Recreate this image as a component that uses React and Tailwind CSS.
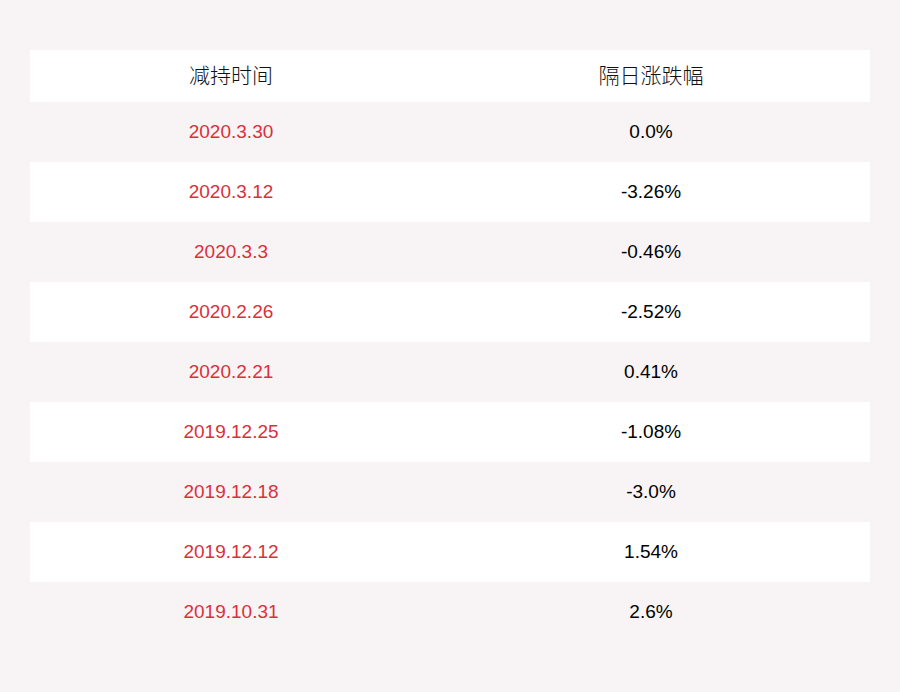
import React from 'react'

const rows = [
  ['2020.3.30', '0.0%'],
  ['2020.3.12', '-3.26%'],
  ['2020.3.3', '-0.46%'],
  ['2020.2.26', '-2.52%'],
  ['2020.2.21', '0.41%'],
  ['2019.12.25', '-1.08%'],
  ['2019.12.18', '-3.0%'],
  ['2019.12.12', '1.54%'],
  ['2019.10.31', '2.6%'],
]

const App = () => {
  return (
    <div className="min-h-[692px] w-[900px] bg-[#f8f4f5] px-[30px] py-[50px] font-['Liberation_Sans','Noto_Sans_CJK_SC',sans-serif]">
      <div className="grid grid-cols-[402px_1fr] h-[52px] bg-white items-center text-[21px] font-light text-[#111]">
        <div className="text-center">减持时间</div>
        <div className="text-center">隔日涨跌幅</div>
      </div>
      {rows.map(([date, pct], i) => (
        <div
          key={date}
          className={`grid grid-cols-[402px_1fr] h-[60px] items-center text-[19px] ${i % 2 === 1 ? 'bg-white' : ''}`}
        >
          <div className="text-center text-[#d9303a]">{date}</div>
          <div className="text-center text-black">{pct}</div>
        </div>
      ))}
    </div>
  )
}

export default App
